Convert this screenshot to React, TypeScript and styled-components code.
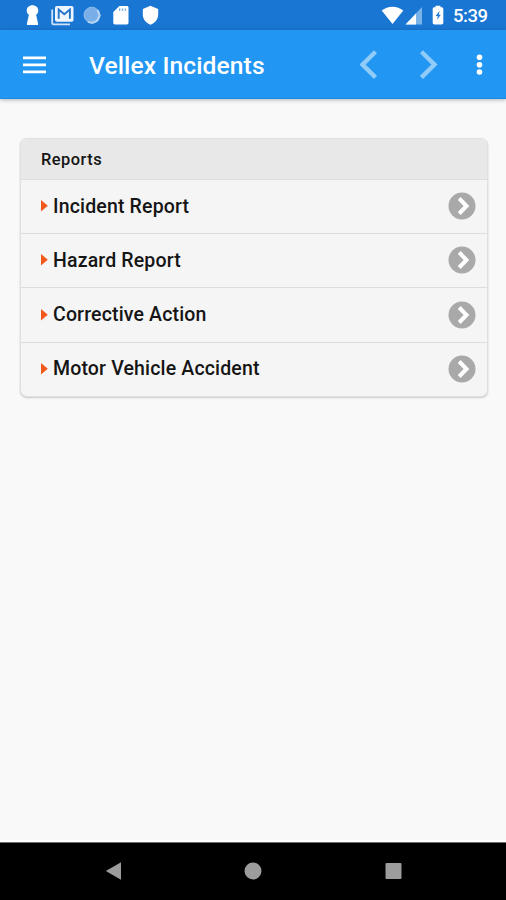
import React from "react";
import styled, { createGlobalStyle } from "styled-components";

const GlobalStyle = createGlobalStyle`
  * { box-sizing: border-box; }
  body {
    margin: 0;
    background: #f9f9f9;
    font-family: Roboto, "Liberation Sans", sans-serif;
    font-weight: 500;
    color: #151515;
  }
  svg { display: block; flex: none; }
`;

const Screen = styled.div`
  display: flex;
  flex-direction: column;
  width: 506px;
  height: 900px;
  overflow: hidden;
`;

const StatusBar = styled.header`
  display: flex;
  justify-content: space-between;
  align-items: flex-start;
  height: 30px;
  padding: 4px 18px 0 26px;
  background: #1976d2;
  color: #fff;
`;

const StatusGroup = styled.div<{ $gap: number }>`
  display: flex;
  align-items: flex-start;
  gap: ${({ $gap }) => $gap}px;
`;

const StatusIcon = styled.span<{ $left: number }>`
  display: flex;
  margin-left: ${({ $left }) => $left}px;
`;

const Clock = styled.time`
  width: 35px;
  margin-left: 8px;
  font-size: 18.5px;
  line-height: 25px;
  letter-spacing: -0.5px;
  white-space: nowrap;
`;

const AppBar = styled.nav`
  display: flex;
  align-items: center;
  height: 69px;
  padding: 0 23px;
  background: #2196f3;
  color: #fff;
  border-bottom: 1px solid #1d8ae3;
  box-shadow: 0 1px 4px rgba(0, 0, 0, 0.28);
  z-index: 1;
`;

const IconButton = styled.button<{ $width: number; $left?: number }>`
  display: flex;
  width: ${({ $width }) => $width}px;
  margin: 1px 0 0 ${({ $left = 0 }) => $left}px;
  padding: 0;
  border: 0;
  background: none;
  color: inherit;
`;

const Title = styled.h1`
  flex: 1;
  margin: 4px 0 0 42px;
  font-size: 24.6px;
  line-height: 32px;
  font-weight: 500;
  letter-spacing: 0.1px;
  white-space: nowrap;
`;

const Content = styled.main`
  flex: 1;
  padding: 39px 18px 0 20px;
  border-bottom: 2px solid #fff;
`;

const Card = styled.section`
  height: 258.5px;
  border: 1px solid #e0e0e0;
  border-radius: 7px;
  overflow: hidden;
  background: #f5f5f5;
  box-shadow: 0 1px 2px rgba(0, 0, 0, 0.2);
`;

const CardHeader = styled.h2`
  height: 41px;
  margin: 0;
  padding: 1px 0 0 20px;
  background: #e8e8e8;
  border-bottom: 1px solid #dedede;
  font-size: 16.4px;
  line-height: 40px;
  font-weight: 500;
  letter-spacing: 0.5px;
`;

const List = styled.ul`
  margin: 0;
  padding: 0;
  list-style: none;
`;

const Row = styled.li`
  display: flex;
  align-items: center;
  height: 54.2px;
  padding: 0 11px 0.6px 20px;
  border-bottom: 1px solid #dddddd;
  &:last-child { border-bottom: 0; padding-bottom: 1.6px; }
`;

const RowLabel = styled.span`
  flex: 1;
  padding: 0.6px 0 0 5px;
  font-size: 19.5px;
  line-height: 28px;
  letter-spacing: 0.16px;
  white-space: nowrap;
`;

const NavigationBar = styled.footer`
  display: flex;
  justify-content: space-between;
  align-items: center;
  height: 58px;
  padding: 0 104.5px 2px 105px;
  background: #000;
  border-top: 1px solid #707070;
  color: #9c9c9c;
`;

const reports = ["Incident Report", "Hazard Report", "Corrective Action", "Motor Vehicle Accident"];

const KeyholeIcon = () => (
  <svg width="13" height="22" fill="#fff">
    <path d="M6.5 1.2C3 1.2.7 3.6.7 6.6c0 2 .8 3.2 2.2 4.2L1 19.2V21h11v-1.8l-1.9-8.4c1.4-1 2.2-2.2 2.2-4.2 0-3-2.3-5.4-5.8-5.4Z" />
  </svg>
);

const MailIcon = () => (
  <svg width="23" height="22" fill="none">
    <path d="M1.2 5.5v13.2c0 .9.7 1.6 1.6 1.6H19" stroke="#cfe2f7" strokeWidth="1.8" />
    <rect x="4" y="2" width="18.5" height="15.8" rx="1.8" fill="#eef6ff" />
    <path d="M7.7 14.8V5.5l5.6 4.8 5.6-4.8v9.3" stroke="#2474ca" strokeWidth="1.9" />
  </svg>
);

const SyncIcon = () => (
  <svg width="18" height="22" fill="none">
    <circle cx="8.8" cy="11" r="7.8" fill="#78afe8" />
    <path d="M5 17.8a7.8 7.8 0 0 0 10-2.2l1.8-4.2-2.1-5.4" stroke="#d8e9fa" strokeWidth="1.8" />
    <circle cx="8.8" cy="11" r="7.8" stroke="#9dc6ef" strokeWidth=".8" />
  </svg>
);

const StorageIcon = () => (
  <svg width="16" height="22">
    <path fill="#fff" d="M6.4 2h7.4c1 0 1.7.7 1.7 1.7v15.1c0 1-.7 1.7-1.7 1.7H2c-1 0-1.7-.7-1.7-1.7V8Z" />
    <path d="M6.6 4.6v2.2M9.5 4.6v2.2M12.4 4.6v2.2" stroke="#6fa9e4" strokeWidth="1.4" />
  </svg>
);

const ShieldIcon = () => (
  <svg width="17" height="22" fill="#fff">
    <path d="M8.5 1.7 16.2 5v5.6c0 4.6-3.2 8.8-7.7 10.1C4 19.4.8 15.2.8 10.6V5Z" />
  </svg>
);

const WifiIcon = () => (
  <svg width="23" height="22" fill="#fff">
    <path d="M.7 6.5C3.8 4.2 7.5 2.7 11.5 2.7s7.7 1.5 10.8 3.8L11.5 20Z" />
  </svg>
);

const SignalIcon = () => (
  <svg width="18" height="22">
    <path d="M17 3v17.5H.5Z" fill="#7ab2ea" />
    <path d="M11 9.4v11.1H.5Z" fill="#fff" />
  </svg>
);

const BatteryIcon = () => (
  <svg width="12" height="22">
    <path fill="#fff" d="M3.5 3.2V1.7h5v1.5h1c1 0 1.8.7 1.8 1.7v13.9c0 1-.8 1.7-1.8 1.7h-7c-1 0-1.8-.7-1.8-1.7V4.9c0-1 .8-1.7 1.8-1.7Z" />
    <path fill="#1976d2" d="M7.7 6.8 3.6 12h2.2l-.8 3.8 3.8-5.1H6.7Z" />
  </svg>
);

const MenuIcon = () => (
  <svg width="24" height="18" fill="#fff">
    <path d="M0 .5h23v2.8H0ZM0 7.5h23v2.8H0ZM0 14.5h23v2.8H0Z" />
  </svg>
);

const PageArrow = ({ forward = false }: { forward?: boolean }) => (
  <svg width="18" height="30" fill="none">
    <path
      d={forward ? "m1.5 1.8 13 12.8L1.5 27.4" : "M15.5 1.8 2.5 14.6l13 12.8"}
      stroke="#91ccf9"
      strokeWidth="4.3"
    />
  </svg>
);

const MoreIcon = () => (
  <svg width="7" height="22" fill="#fff">
    <circle cx="3.5" cy="3.3" r="2.8" />
    <circle cx="3.5" cy="10.7" r="2.8" />
    <circle cx="3.5" cy="18" r="2.8" />
  </svg>
);

const Marker = () => (
  <svg width="7" height="12">
    <path d="M0 0 6.8 5.7 0 11.4Z" fill="#f0591b" />
  </svg>
);

const OpenIcon = () => (
  <svg width="28" height="28">
    <circle cx="14" cy="14" r="13.5" fill="#a9a9a9" />
    <path d="m11.2 6.5 7.3 7.5-7.3 7.5" fill="none" stroke="#fff" strokeWidth="4" />
  </svg>
);

export default function App() {
  return (
    <Screen>
      <GlobalStyle />
      <StatusBar>
        <StatusGroup $gap={12}>
          <KeyholeIcon />
          <MailIcon />
          <StatusIcon $left={-3}><SyncIcon /></StatusIcon>
          <StorageIcon />
          <StatusIcon $left={1}><ShieldIcon /></StatusIcon>
        </StatusGroup>
        <StatusGroup $gap={1}>
          <WifiIcon />
          <SignalIcon />
          <StatusIcon $left={8}><BatteryIcon /></StatusIcon>
          <Clock>5:39</Clock>
        </StatusGroup>
      </StatusBar>
      <AppBar>
        <IconButton $width={24} aria-label="Menu"><MenuIcon /></IconButton>
        <Title>Vellex Incidents</Title>
        <IconButton $width={18} aria-label="Back"><PageArrow /></IconButton>
        <IconButton $width={18} $left={42} aria-label="Forward"><PageArrow forward /></IconButton>
        <IconButton $width={7} $left={38} aria-label="More"><MoreIcon /></IconButton>
      </AppBar>
      <Content>
        <Card>
          <CardHeader>Reports</CardHeader>
          <List>
            {reports.map((report) => (
              <Row key={report}>
                <Marker />
                <RowLabel>{report}</RowLabel>
                <OpenIcon />
              </Row>
            ))}
          </List>
        </Card>
      </Content>
      <NavigationBar>
        <svg width="17" height="20"><path d="M.8 10 16 1.2v17.6Z" fill="currentColor" /></svg>
        <svg width="18" height="18"><circle cx="9" cy="9" r="8.5" fill="currentColor" /></svg>
        <svg width="17" height="18"><rect x=".5" y="1" width="16" height="16" rx="1" fill="currentColor" /></svg>
      </NavigationBar>
    </Screen>
  );
}
